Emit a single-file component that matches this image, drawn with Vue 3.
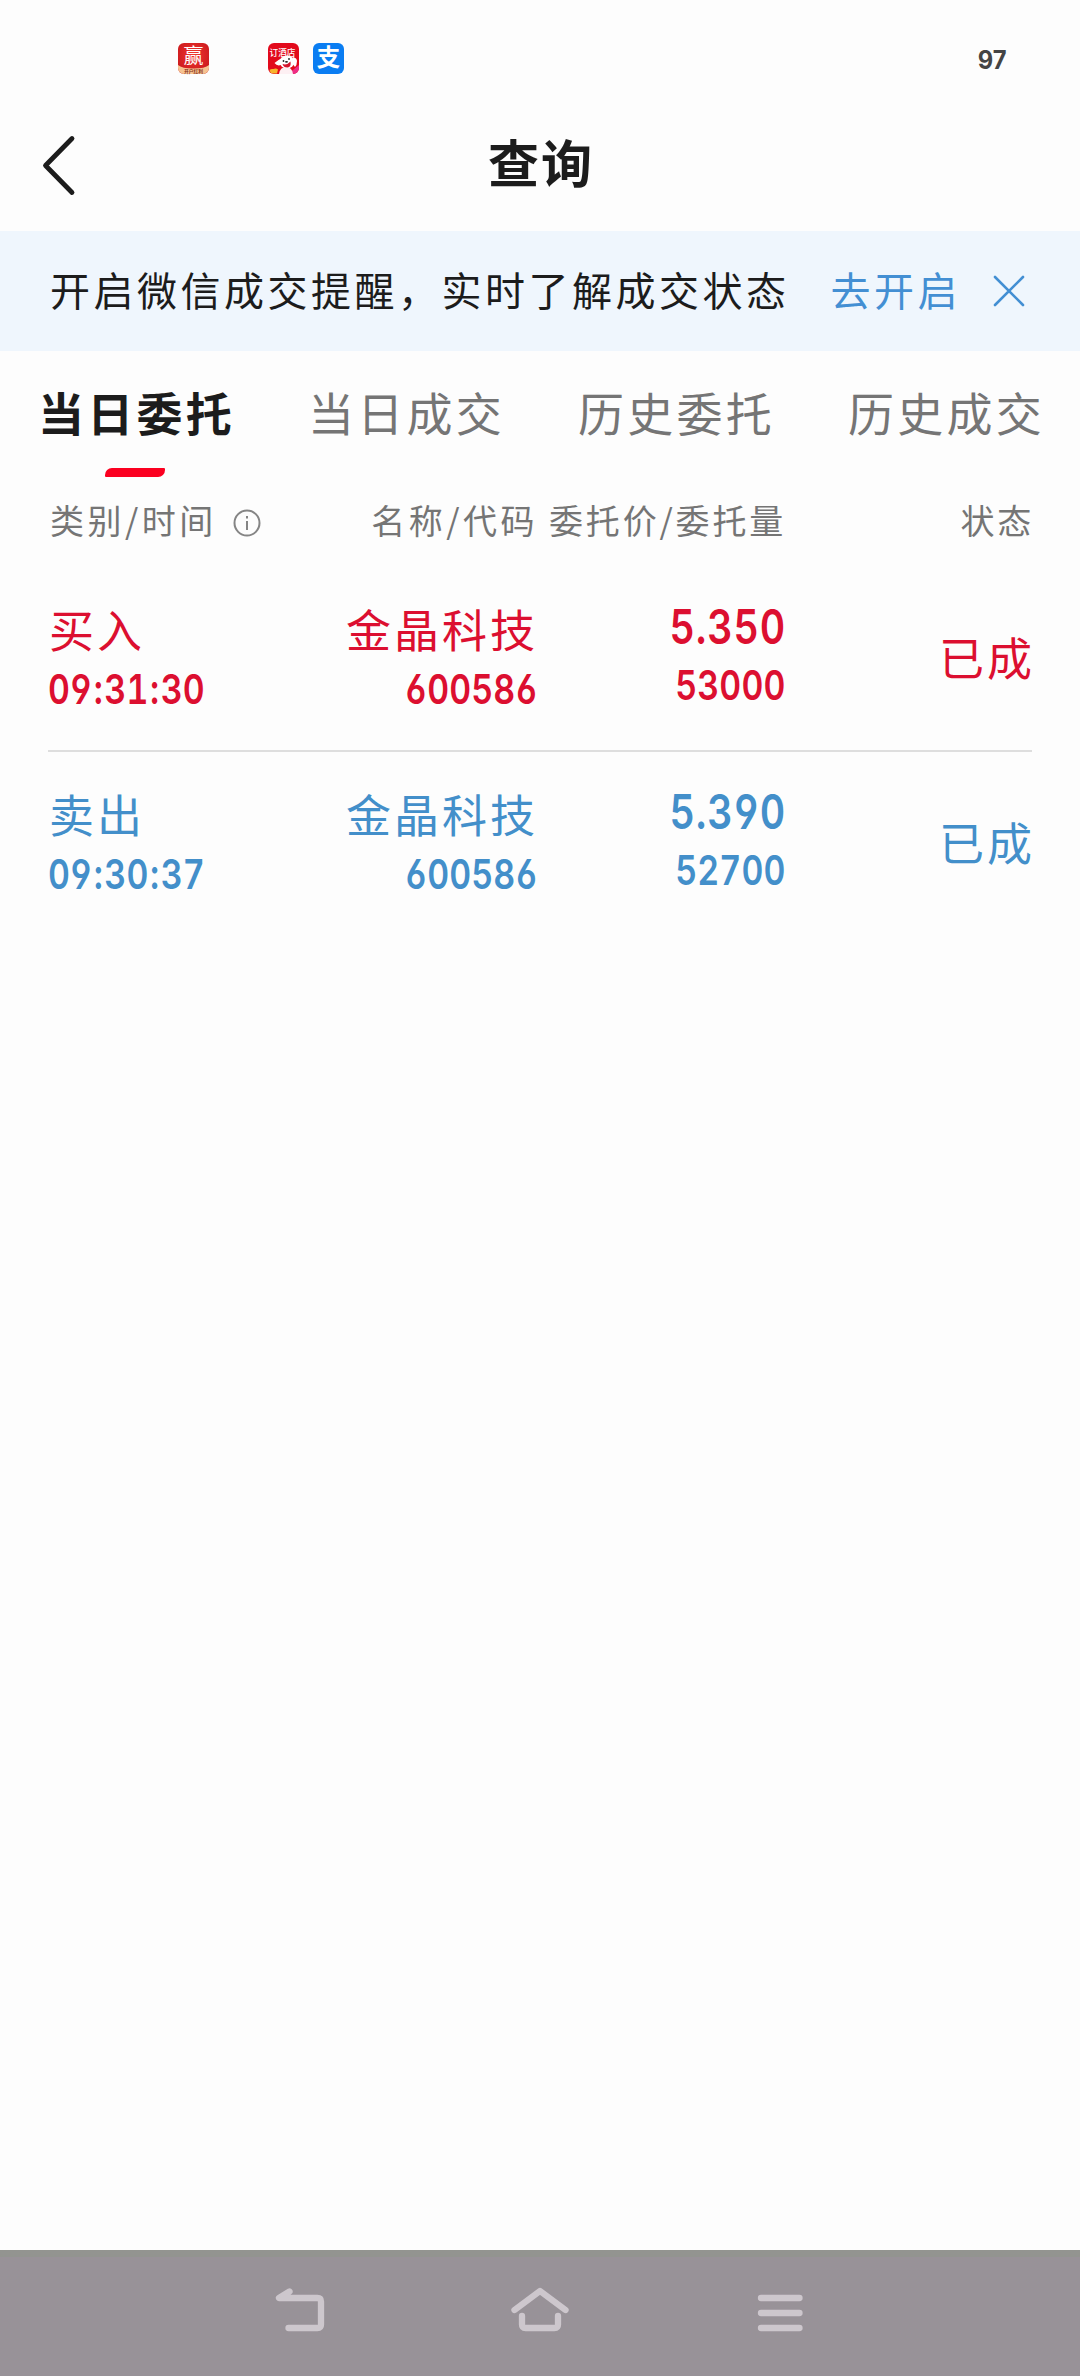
<script setup>
const tabs = ['当日委托', '当日成交', '历史委托', '历史成交']
const orders = [
  { side: 'buy', label: '买入', time: '09:31:30', name: '金晶科技', code: '600586', price: '5.350', amount: '53000', state: '已成' },
  { side: 'sell', label: '卖出', time: '09:30:37', name: '金晶科技', code: '600586', price: '5.390', amount: '52700', state: '已成' },
]
</script>

<template>
  <div class="screen">
    <div class="status">
      <svg class="app app-win" viewBox="0 0 31 31">
        <defs>
          <radialGradient id="win" cx="50%" cy="40%" r="60%">
            <stop offset="0" stop-color="#f2372f" /><stop offset="1" stop-color="#cb1a1e" />
          </radialGradient>
        </defs>
        <rect width="31" height="31" rx="6" fill="url(#win)" />
        <path d="M0 22Q4 25.500 15.500 25.500Q27 25.500 31 22V25a6 6 0 0 1-6 6H6a6 6 0 0 1-6-6z" fill="#f6c391" />
        <text x="15.500" y="20" font-size="20" text-anchor="middle" fill="#fff">赢</text>
        <text x="15.500" y="30" font-size="4.800" font-weight="700" text-anchor="middle" fill="#8a3420">开户红利</text>
      </svg>
      <svg class="app app-hotel" viewBox="0 0 31 31">
        <defs><clipPath id="tile"><rect width="31" height="31" rx="6" /></clipPath></defs>
        <g clip-path="url(#tile)">
          <rect width="31" height="31" fill="#e20a1c" />
          <path d="M20 31L31 22V31z" fill="#ee2d86" />
          <path d="M14 15Q10 17 6.500 20Q9 23.500 13 22zM25 14Q29 15 29 18Q29 22 27 24L24 20z" fill="#fff" />
          <ellipse cx="19" cy="19" rx="7.500" ry="6.500" fill="#fff" />
          <path d="M11 31Q12 24 18 24Q24 24 25 31z" fill="#fdf0f3" />
          <path d="M14.500 21Q19 22.500 22.500 18.500Q23.500 24 19.500 24.500Q15.500 24.500 14.500 21z" fill="#d4142c" />
          <circle cx="15.500" cy="18" r="0.900" fill="#222" /><circle cx="21" cy="16" r="0.900" fill="#222" />
          <ellipse cx="18.500" cy="18.800" rx="1.500" ry="0.900" fill="#222" />
          <path d="M1.500 27Q3 25.500 5.500 26Q8 25 10 26.500L9 30.500H3z" fill="#f7b42c" />
        </g>
        <text x="14.500" y="13" font-size="8.600" font-weight="500" text-anchor="middle" fill="#fff">订酒店</text>
      </svg>
      <svg class="app" viewBox="0 0 31 31">
        <rect width="31" height="31" rx="6" fill="#0a7df2" />
        <text x="15.500" y="23" font-size="23.500" font-weight="700" text-anchor="middle" fill="#fff">支</text>
      </svg>
      <span class="battery">97</span>
    </div>

    <header class="bar">
      <svg class="back" width="40" height="60" viewBox="0 0 40 60">
        <path d="M32 2.500L5.500 29.500L32 56.500" />
      </svg>
      <h1>查询</h1>
    </header>

    <div class="notice">
      <span class="msg">开启微信成交提醒，实时了解成交状态</span>
      <span class="open">去开启</span>
      <svg class="close" width="32" height="32" viewBox="0 0 32 32"><path d="M2 2L30 30M30 2L2 30" /></svg>
    </div>

    <nav class="tabs">
      <div v-for="(t, i) in tabs" :key="t" class="tab" :class="{ active: i === 0 }">
        <span>{{ t }}</span><i v-if="i === 0" />
      </div>
    </nav>

    <div class="grid head">
      <div class="kind">类别/时间
        <svg width="28" height="28" viewBox="0 0 28 28"><circle cx="14" cy="14" r="12.500" /><path d="M14 12V21M14 7V9.500" /></svg>
      </div>
      <div class="name">名称/代码</div>
      <div class="deal">委托价/委托量</div>
      <div class="end">状态</div>
    </div>

    <div v-for="o in orders" :key="o.time" class="grid row" :class="o.side">
      <div class="cell left">
        <span class="cn">{{ o.label }}</span>
        <span class="num"><template v-for="(p, i) in o.time.split(':')" :key="i"><span v-if="i" class="colon">:</span>{{ p }}</template></span>
      </div>
      <div class="cell"><span class="cn">{{ o.name }}</span><span class="num">{{ o.code }}</span></div>
      <div class="cell price"><span class="num big">{{ o.price }}</span><span class="num">{{ o.amount }}</span></div>
      <div class="cell state"><span class="cn">{{ o.state }}</span></div>
    </div>

    <footer class="sysnav">
      <svg width="60" height="60" viewBox="0 0 60 60"><path d="M19.500 11.500L9 18H47.500Q51 18 51 21.500V44.500Q51 48 47.500 48H18.500" /></svg>
      <svg width="60" height="60" viewBox="0 0 60 60"><path d="M4.500 30L30 11L55.500 30M12 36V44.500Q12 48 15.500 48H44.500Q48 48 48 44.500V36" /></svg>
      <svg width="60" height="60" viewBox="0 0 60 60"><path d="M11 18H49.500M11 33H49.500M11 48H49.500" /></svg>
    </footer>
  </div>
</template>

<style>
body { background: #fdfdfd; }
</style>

<style scoped>
.screen {
  width: 1080px;
  height: 2376px;
  display: flex;
  flex-direction: column;
  background: #fdfdfd;
  color: #1c1c1c;
  font-family: "Noto Sans CJK SC", sans-serif;
  overflow: hidden;
}
svg { flex: none; display: block; overflow: visible; }
.status {
  height: 100px;
  padding: 16px 73px 0 177.500px;
  display: flex;
  align-items: center;
  box-sizing: border-box;
}
.app { width: 31px; height: 31px; margin-right: 14px; }
.app-win { margin-right: 59px; }
.battery {
  margin-left: auto;
  font: 700 25px/30px Inter, sans-serif;
  padding-top: 4px;
  color: #444;
  transform: scaleX(.95);
}
.bar { height: 131px; display: flex; align-items: center; padding: 0 40px; }
.back path { fill: none; stroke: #1c1c1c; stroke-width: 4.800; stroke-linecap: round; stroke-linejoin: round; }
h1 { flex: 1; margin: 0 38px 9px 0; text-align: center; font-size: 51px; line-height: 70px; font-weight: 700; letter-spacing: 2px; }
.notice {
  height: 120px;
  padding-left: 50px;
  display: flex;
  align-items: center;
  background: #eff6fd;
  font-size: 40px;
  letter-spacing: 3.500px;
  line-height: 60px;
  white-space: nowrap;
}
.msg, .open { margin-top: -5px; }
.open { margin-left: 41px; color: #438fd3; }
.close { margin: 0 0 0 32px; }
.close path { fill: none; stroke: #438fd3; stroke-width: 2.600; stroke-linecap: round; }
.tabs { height: 130px; display: flex; }
.tab {
  flex: 1;
  display: flex;
  flex-direction: column;
  align-items: center;
  padding-top: 26px;
  color: #757575;
  font-size: 46px;
  line-height: 68px;
  letter-spacing: 3.200px;
}
.tab span { padding-left: 3px; }
.tab.active { color: #1c1c1c; font-weight: 700; }
.tab i { width: 60px; height: 9px; margin-top: 23px; background: #fb0020; border-radius: 7px 1px; }
.grid {
  margin: 0 48px;
  display: grid;
  grid-template-columns: 200px 290px 248px 249px;
  text-align: right;
}
.head { height: 86px; padding-top: 14px; box-sizing: border-box; font-size: 34px; line-height: 50px; letter-spacing: 3.500px; color: #757575; white-space: nowrap; }
.kind { display: flex; align-items: center; height: 50px; text-align: left; padding-left: 2px; }
.kind svg { margin: 5px 0 0 16.500px; fill: none; stroke: #858585; stroke-width: 2; }
.head .deal, .head .end { letter-spacing: 2.800px; }
.head .end { padding-right: 1px; }
.row { height: 185px; box-sizing: border-box; }
.row.buy { background: linear-gradient(#dedede, #dedede) 0 183px / 984px 2px no-repeat; }
.cell { display: flex; flex-direction: column; align-items: flex-end; padding-top: 29px; }
.cell.left { align-items: flex-start; }
.cn { font-size: 45px; line-height: 66px; letter-spacing: 3px; }
.left .cn { padding-left: 1px; }
.num {
  font: 600 41.300px/54px Inter, sans-serif;
  font-feature-settings: "cv03", "cv04", "tnum", "calt" 0;
  letter-spacing: .2px;
  transform: scaleX(.82);
  transform-origin: right;
}
.left .num { transform-origin: left; }
.colon { margin: 0 1.800px; }
.num.big { font-size: 48px; line-height: 62px; letter-spacing: 1px; }
.state { justify-content: center; padding: 0 0 6px; }
.buy { color: #dc0f30; }
.sell { color: #438fca; }
.sysnav {
  margin-top: auto;
  height: 126px;
  box-sizing: border-box;
  border-top: 7px solid #939490;
  padding: 23px 270px 0;
  display: flex;
  justify-content: space-between;
  background: #989298;
}
.sysnav path { fill: none; stroke: #cdc7cd; stroke-width: 6.300; stroke-linecap: round; stroke-linejoin: round; }
</style>
